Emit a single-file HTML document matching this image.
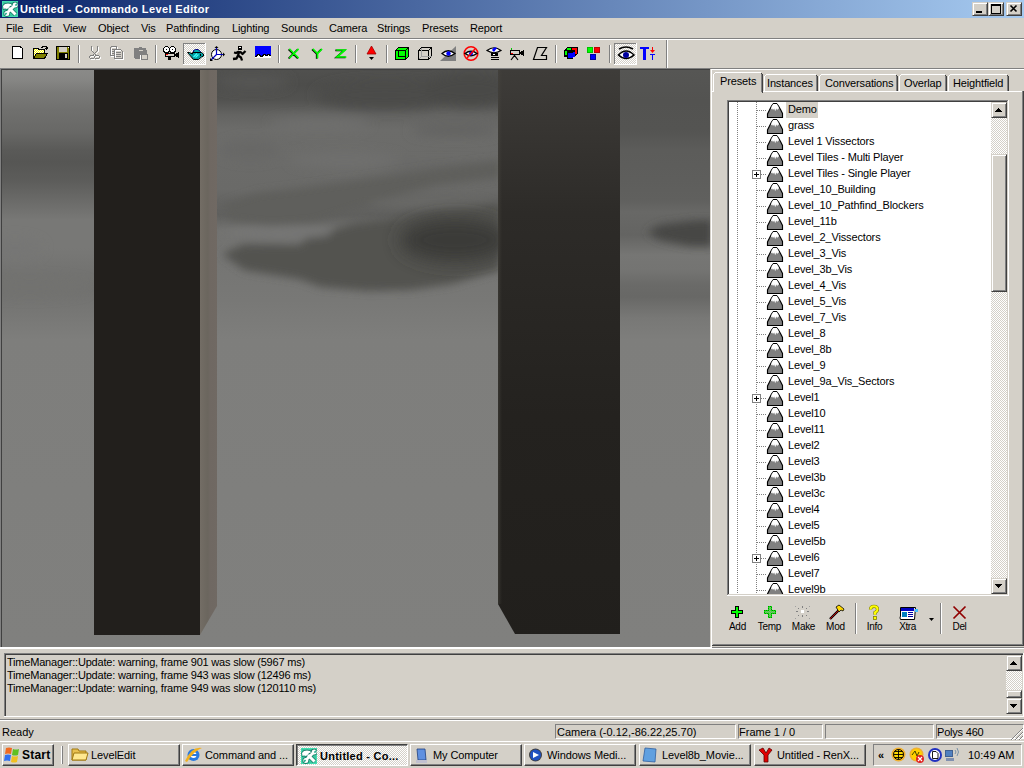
<!DOCTYPE html><html><head><meta charset="utf-8"><style>
*{margin:0;padding:0;box-sizing:border-box}
html,body{width:1024px;height:768px;overflow:hidden;background:#D4D0C8;font-family:"Liberation Sans",sans-serif;font-size:11px;color:#000}
.a{position:absolute}
.t{position:absolute;white-space:nowrap;line-height:13px}
.sunk{position:absolute;border-style:solid;border-width:1px;border-color:#808080 #fff #fff #808080}
.sbtn{position:absolute;background:#D4D0C8;border:1px solid;border-color:#D4D0C8 #404040 #404040 #D4D0C8;box-shadow:inset 1px 1px 0 #fff,inset -1px -1px 0 #808080}
.chk{background-color:#fff;background-image:linear-gradient(45deg,#D4D0C8 25%,transparent 25%,transparent 75%,#D4D0C8 75%),linear-gradient(45deg,#D4D0C8 25%,transparent 25%,transparent 75%,#D4D0C8 75%);background-size:2px 2px;background-position:0 0,1px 1px}
.hl{position:absolute;height:1px}
.vl{position:absolute;width:1px}
</style></head><body>
<div class="a" style="left:0;top:0;width:1024px;height:18px;background:linear-gradient(to right,#0A246A,#A6CAF0)"></div>
<svg class="a" style="left:2px;top:1px" width="16" height="16" viewBox="0 0 16 16"><rect width="16" height="16" fill="#44dcb0"/>
<rect x="1" y="1" width="14" height="14" fill="#34b896" opacity="0.6"/>
<g fill="#0e6a58" stroke="#0e6a58" stroke-width="1.6" opacity="0.85">
<path d="M1 5L3 3L6 2.5L9 3L10 4.5L8 5L7 6.5L5 8L3 7.5L1.5 8Z"/>
<path d="M7 7L13.5 13.5" stroke-width="4.4"/>
<path d="M12.5 4.5L5 12" stroke-width="4.2"/>
<circle cx="13.2" cy="4" r="2.5"/>
<circle cx="4.8" cy="12.6" r="2.5"/>
</g><g fill="#fff" stroke="#fff" stroke-width="0">
<path d="M1 5L3 3L6 2.5L9 3L10 4.5L8 5L7 6.5L5 8L3 7.5L1.5 8Z"/>
<path d="M7 7L13.5 13.5" stroke-width="3"/>
<path d="M12.5 4.5L5 12" stroke-width="2.8"/>
<circle cx="13.2" cy="4" r="2.5"/>
<circle cx="4.8" cy="12.6" r="2.5"/>
</g><path d="M14.6 2.2L12.8 4L14 5.2L15.6 3.5Z M3.4 14.4L5.2 12.6L4 11.4L2.4 13Z" fill="#30b090"/></svg>
<div class="t" style="left:20px;top:3px;color:#fff;font-weight:bold;letter-spacing:0.38px">Untitled - Commando Level Editor</div>
<div class="sbtn" style="left:972px;top:2px;width:16px;height:14px"></div>
<div class="sbtn" style="left:988px;top:2px;width:16px;height:14px"></div>
<div class="sbtn" style="left:1006px;top:2px;width:16px;height:14px"></div>
<svg class="a" style="left:972px;top:2px" width="50" height="14" viewBox="0 0 50 14" shape-rendering="crispEdges">
<rect x="4" y="9" width="6" height="2" fill="#000"/>
<rect x="19" y="2" width="9" height="9" fill="none" stroke="#000" stroke-width="1" transform="translate(0.5,0.5)"/>
<rect x="19" y="2" width="10" height="2" fill="#000"/>
<path d="M38.5 3.5L44.5 9.5M44.5 3.5L38.5 9.5" stroke="#000" stroke-width="1.6" shape-rendering="auto"/>
</svg>
<div class="t" style="left:6px;top:22px;letter-spacing:-0.15px">File</div>
<div class="t" style="left:33px;top:22px;letter-spacing:-0.15px">Edit</div>
<div class="t" style="left:63px;top:22px;letter-spacing:-0.15px">View</div>
<div class="t" style="left:98px;top:22px;letter-spacing:-0.15px">Object</div>
<div class="t" style="left:141px;top:22px;letter-spacing:-0.15px">Vis</div>
<div class="t" style="left:166px;top:22px;letter-spacing:-0.15px">Pathfinding</div>
<div class="t" style="left:232px;top:22px;letter-spacing:-0.15px">Lighting</div>
<div class="t" style="left:281px;top:22px;letter-spacing:-0.15px">Sounds</div>
<div class="t" style="left:329px;top:22px;letter-spacing:-0.15px">Camera</div>
<div class="t" style="left:377px;top:22px;letter-spacing:-0.15px">Strings</div>
<div class="t" style="left:422px;top:22px;letter-spacing:-0.15px">Presets</div>
<div class="t" style="left:470px;top:22px;letter-spacing:-0.15px">Report</div>
<div class="hl" style="left:0px;top:38px;width:1024px;background:#808080"></div>
<div class="hl" style="left:0px;top:39px;width:1024px;background:#fff"></div>
<div class="hl" style="left:0px;top:68px;width:1024px;background:#808080"></div>
<div class="vl" style="left:78px;top:45px;height:18px;background:#808080"></div><div class="vl" style="left:79px;top:45px;height:18px;background:#fff"></div>
<div class="vl" style="left:155px;top:45px;height:18px;background:#808080"></div><div class="vl" style="left:156px;top:45px;height:18px;background:#fff"></div>
<div class="vl" style="left:278px;top:45px;height:18px;background:#808080"></div><div class="vl" style="left:279px;top:45px;height:18px;background:#fff"></div>
<div class="vl" style="left:355px;top:45px;height:18px;background:#808080"></div><div class="vl" style="left:356px;top:45px;height:18px;background:#fff"></div>
<div class="vl" style="left:386px;top:45px;height:18px;background:#808080"></div><div class="vl" style="left:387px;top:45px;height:18px;background:#fff"></div>
<div class="vl" style="left:555px;top:45px;height:18px;background:#808080"></div><div class="vl" style="left:556px;top:45px;height:18px;background:#fff"></div>
<div class="vl" style="left:609px;top:45px;height:18px;background:#808080"></div><div class="vl" style="left:610px;top:45px;height:18px;background:#fff"></div>
<div class="vl" style="left:666px;top:40px;height:28px;background:#808080"></div><div class="vl" style="left:667px;top:40px;height:28px;background:#fff"></div>
<svg class="a" style="left:0;top:40px" width="1024" height="28" viewBox="0 40 1024 28">
<defs>
<pattern id="ydith" width="2" height="2" patternUnits="userSpaceOnUse"><rect width="2" height="2" fill="#ffff00"/><rect width="1" height="1" fill="#fff"/><rect x="1" y="1" width="1" height="1" fill="#fff"/></pattern>
</defs>
<g shape-rendering="crispEdges">
<!-- new doc -->
<path d="M12.5 46.5H20.5L22.5 48.5V58.5H12.5Z" fill="#fff" stroke="#000"/>
<rect x="20" y="47" width="1" height="1" fill="#000"/>
<!-- open -->
<path d="M33.5 58.5V48.5H38.5V49.5H44.5V53.5" fill="url(#ydith)" stroke="#000"/>
<path d="M33.5 58.5L36.5 53.5H47.5L44.5 58.5Z" fill="#808000" stroke="#000"/>
<path d="M41 48V47H42V46H46V47H47V49" fill="none" stroke="#000"/>
<rect x="45" y="48" width="3" height="1" fill="#000"/><rect x="46" y="49" width="1" height="1" fill="#000"/>
<!-- save -->
<rect x="56" y="46" width="14" height="14" fill="#000"/>
<rect x="57" y="47" width="12" height="12" fill="#808000"/>
<rect x="59" y="47" width="8" height="5" fill="#D4D0C8"/>
<rect x="59" y="53" width="9" height="6" fill="#000"/>
<rect x="65" y="54" width="2" height="4" fill="#D4D0C8"/>
<rect x="68" y="47" width="1" height="1" fill="#fff"/>
</g>
<!-- disabled cut/copy/paste -->
<g fill="none" shape-rendering="crispEdges">
<g stroke="#fff" transform="translate(1,1)">
<path d="M91.5 46V50.5L96.5 55.5M97.5 46V50.5L92.5 55.5M92 55.5A1.6 1.6 0 1 0 92 58.5A1.6 1.6 0 1 0 92 55.5M97 55.5A1.6 1.6 0 1 0 97 58.5A1.6 1.6 0 1 0 97 55.5"/>
<path d="M110.5 46.5H116.5V48.5M110.5 46.5V55.5H113.5M114.5 49.5H120.5L122.5 51.5V58.5H114.5Z"/>
</g>
<g stroke="#808080">
<path d="M91.5 46V50.5L96.5 55.5M97.5 46V50.5L92.5 55.5M92 55.5A1.6 1.6 0 1 0 92 58.5A1.6 1.6 0 1 0 92 55.5M97 55.5A1.6 1.6 0 1 0 97 58.5A1.6 1.6 0 1 0 97 55.5"/>
<path d="M110.5 46.5H116.5V48.5M110.5 46.5V55.5H113.5M114.5 49.5H120.5L122.5 51.5V58.5H114.5Z"/>
<path d="M112 49.5H115M112 51.5H115M112 53.5H114M116 52.5H121M116 54.5H121M116 56.5H121"/>
</g>
</g>
<g shape-rendering="crispEdges">
<rect x="134" y="48" width="2" height="11" fill="#fff" opacity="0"/>
<path d="M134 48H139V47H142V48H146V50H147V55H140V59H135V58H134Z" fill="#808080"/>
<rect x="140" y="55" width="8" height="5" fill="#fff"/>
<rect x="141" y="54" width="6" height="5" fill="#D4D0C8" stroke="#808080" stroke-width="1"/>
<rect x="139" y="50" width="4" height="1" fill="#D4D0C8"/>
</g>
<!-- camera -->
<g shape-rendering="crispEdges">
<circle cx="166.5" cy="49.5" r="3" fill="#fff" stroke="#000"/>
<circle cx="172.5" cy="49.5" r="3" fill="#fff" stroke="#000"/>
<rect x="166" y="49" width="1" height="1" fill="#000"/><rect x="172" y="49" width="1" height="1" fill="#000"/>
<rect x="165" y="53" width="10" height="4" fill="#000"/>
<rect x="166" y="54" width="8" height="2" fill="#D4D0C8"/>
<rect x="166" y="54" width="2" height="1" fill="#ff0000"/>
<path d="M175 54L179 52V58L175 56Z" fill="#000"/>
<rect x="168" y="57" width="3" height="3" fill="#000"/>
</g>
<!-- teapot pressed button -->
<rect x="183" y="43" width="23" height="22" fill="url(#chk2)"/>
<defs><pattern id="chk2" width="2" height="2" patternUnits="userSpaceOnUse"><rect width="2" height="2" fill="#D4D0C8"/><rect width="1" height="1" fill="#fff"/><rect x="1" y="1" width="1" height="1" fill="#fff"/></pattern></defs>
<g shape-rendering="crispEdges">
<rect x="183" y="43" width="23" height="1" fill="#808080"/><rect x="183" y="43" width="1" height="22" fill="#808080"/>
<rect x="183" y="64" width="23" height="1" fill="#fff"/><rect x="205" y="43" width="1" height="22" fill="#fff"/>
</g>
<path d="M187.5 52.5H189.5L192.5 54V52.5H201.5L203.5 54V56L201.5 57L198.5 59.5H193.5Z" fill="#00a0a0" stroke="#000" stroke-width="1"/>
<path d="M193.5 52V50.5L195.5 49.5H198L200.5 51.5V52" fill="#00a8a8" stroke="#000080" stroke-width="1"/>
<path d="M193.5 57L197 53.5M195.5 57.5L198.5 54.5" stroke="#40ffff" stroke-width="1.1"/>
<rect x="200" y="54" width="1" height="2" fill="#000"/>
<!-- axis -->
<circle cx="216.5" cy="54.5" r="5" fill="#fff" stroke="#000"/>
<path d="M216.5 47V54.5H223M216.5 54.5L211 60" stroke="#0000c0" stroke-width="1.2" fill="none"/>
<path d="M214.5 48L216.5 46L218.5 48ZM223 52.5L225 54.5L223 56.5ZM210 58V61H213Z" fill="#000"/>
<!-- runner -->
<rect x="238" y="46" width="4" height="4" fill="#000"/><rect x="239" y="47" width="2" height="1" fill="#fff"/>
<path d="M239.5 51L238 55.5L241 57.5L242 60.5M238 55.5L236.5 58.5L233 59M239 51.5L236 53L234 52.5M240 51.5L242.5 54L245.5 51" stroke="#000" stroke-width="2.3" fill="none" stroke-linejoin="round"/>
<!-- blue flag -->
<g shape-rendering="crispEdges">
<rect x="255" y="46" width="16" height="11" fill="#0000ff"/>
<path d="M255 58V56H256V55H257V54H259V55H260V56H262V55H263V54H265V55H267V54H269V55H271V58Z" fill="#fff"/>
<path d="M255 56.5H256.5V55.5H257.5V54.5H259.5V55.5H260.5V56.5H262.5V55.5H263.5V54.5H265.5V55.5H267.5V54.5H269.5V55.5H271" stroke="#000" fill="none"/>
</g>
<!-- XYZ -->
<g fill="none" stroke-width="1.7" stroke-linecap="square">
<path d="M290 49.5L298 57.5M298 49.5L290 57.5M313.5 49.5L317.5 53.5L321.5 49.5M317.5 53.5V57.5M337 50H345L337 57H345.5" stroke="#000" transform="translate(-0.8,0.4)"/>
<path d="M290 49.5L298 57.5M298 49.5L290 57.5M313.5 49.5L317.5 53.5L321.5 49.5M317.5 53.5V57.5M337 50H345L337 57H345.5" stroke="#00ff00"/>
</g>
<!-- red cone -->
<path d="M371.5 46L376 54H367Z" fill="#ff0000" stroke="#a00000" stroke-width="0.8"/>
<path d="M369 57H374L371.5 60Z" fill="#000"/>
<!-- green cube -->
<g shape-rendering="crispEdges">
<path d="M395.5 59.5V50.5L398.5 47.5H408.5V56.5L405.5 59.5Z" fill="#00ff00" stroke="#000"/>
<path d="M398.5 50.5H405.5V56.5H398.5ZM395.5 50.5H405.5V59.5M405.5 50.5L408.5 47.5" fill="none" stroke="#000"/>
<!-- wire cube -->
<path d="M418.5 59.5V50.5L421.5 47.5H431.5V56.5L428.5 59.5Z" fill="none" stroke="#000"/>
<path d="M418.5 50.5H428.5V59.5M428.5 50.5L431.5 47.5" fill="none" stroke="#000"/>
<path d="M421.5 47.5V56.5H431.5M421.5 56.5L418.5 59.5" fill="none" stroke="#a0a0a0"/>
</g>
<!-- eye w/ triangle -->
<path d="M440 61L456 46V61Z" fill="#808080"/>
<path d="M442 53.5Q448 48 455 53.5Q448 59 442 53.5Z" fill="#fff" stroke="#000" stroke-width="1.3"/>
<circle cx="448.5" cy="53.5" r="2.2" fill="#0000ff"/>
<!-- no eye -->
<circle cx="471" cy="53.5" r="6.8" fill="none" stroke="#ff0000" stroke-width="1.6"/>
<path d="M465 53.5Q471 49 477 53.5Q471 58 465 53.5Z" fill="#fff" stroke="#000" stroke-width="1.3"/>
<circle cx="471" cy="53.5" r="2" fill="#0000ff"/>
<path d="M467 58L475 49" stroke="#ff0000" stroke-width="1.5"/>
<!-- eye stack -->
<path d="M487 50.5Q494 45 501 50.5Q494 55 487 50.5Z" fill="#fff" stroke="#000" stroke-width="1.2"/>
<path d="M492 50Q494 46 497 48L494 52Z" fill="#0000ff"/>
<g shape-rendering="crispEdges">
<rect x="491" y="53" width="7" height="3" fill="#000"/><rect x="493" y="54" width="2" height="1" fill="#fff"/>
<rect x="491" y="57" width="8" height="1" fill="#000"/><rect x="491" y="59" width="8" height="1" fill="#000"/>
<!-- camera tripod -->
<rect x="511" y="48" width="1" height="3" fill="#00c000"/>
<rect x="510" y="50" width="10" height="5" fill="#000"/>
<rect x="511" y="51" width="8" height="3" fill="#D4D0C8"/>
<rect x="511" y="53" width="2" height="1" fill="#ff0000"/>
<path d="M520 52L524 50V56L520 54Z" fill="#000"/>
</g>
<path d="M511 60L514.5 55.5L518 60M514.5 55.5V57" stroke="#000" stroke-width="1.2" fill="none"/>
<!-- Z shape -->
<path d="M537.5 47.5H546.5L541.5 55.5H546.5V59.5H533.5Z" fill="none" stroke="#000" stroke-width="1.2"/>
<!-- rgb cube -->
<g shape-rendering="crispEdges">
<path d="M564.5 56.5V50.5L567.5 47.5H577.5V53.5L573.5 57.5" fill="#000" stroke="#000"/>
<rect x="567" y="48" width="4" height="2" fill="#00ff00"/><rect x="572" y="48" width="5" height="2" fill="#ff0000"/>
<rect x="565" y="51" width="2" height="4" fill="#00ff00"/><rect x="575" y="50" width="2" height="4" fill="#ff0000"/>
<rect x="567" y="52" width="6" height="7" fill="#000"/><rect x="568" y="53" width="5" height="5" fill="#0000ff"/>
<rect x="573" y="52" width="2" height="5" fill="#0000ff"/>
<!-- three cubes -->
<rect x="587" y="47" width="6" height="6" fill="#00c000"/><rect x="588" y="48" width="4" height="4" fill="#00ff00"/>
<rect x="594" y="47" width="6" height="6" fill="#c00000"/><rect x="595" y="48" width="4" height="4" fill="#ff0000"/>
<rect x="590" y="54" width="6" height="6" fill="#0000a0"/><rect x="591" y="55" width="4" height="4" fill="#0000ff"/>
</g>
<!-- eye pressed -->
<rect x="614" y="43" width="23" height="22" fill="url(#chk2)"/>
<g shape-rendering="crispEdges">
<rect x="614" y="43" width="23" height="1" fill="#808080"/><rect x="614" y="43" width="1" height="22" fill="#808080"/>
<rect x="614" y="64" width="23" height="1" fill="#fff"/><rect x="636" y="43" width="1" height="22" fill="#fff"/>
</g>
<path d="M619 49Q626 45 633 49" stroke="#000" stroke-width="1.5" fill="none"/>
<path d="M618.5 55Q626 47 634 55Q626 62 618.5 55Z" fill="#fff" stroke="#000" stroke-width="1.6"/>
<circle cx="626" cy="55" r="3" fill="#0000a0"/>
<!-- T icons -->
<g shape-rendering="crispEdges">
<rect x="640" y="47" width="9" height="2" fill="#0000ff"/><rect x="643" y="47" width="3" height="13" fill="#0000ff"/>
<rect x="650" y="54" width="5" height="1" fill="#0000ff"/><rect x="652" y="54" width="1" height="6" fill="#0000ff"/>
<rect x="652" y="47" width="1" height="5" fill="#ff0000"/>
</g>
<path d="M650 50H655L652.5 53Z" fill="#ff0000"/>
</svg>

<div class="vl" style="left:0px;top:68px;height:580px;background:#808080"></div>
<div class="hl" style="left:0px;top:68px;width:711px;background:#808080"></div>
<div class="vl" style="left:1px;top:69px;height:578px;background:#404040"></div>
<div class="hl" style="left:1px;top:69px;width:709px;background:#404040"></div>
<div class="a" style="left:2px;top:70px;width:708px;height:577px;overflow:hidden"><svg width="708" height="577" viewBox="2 70 708 577" style="position:absolute;left:0;top:0;display:block">
<defs><linearGradient id="gl" x1="0" y1="70" x2="0" y2="646" gradientUnits="userSpaceOnUse"><stop offset="0.0000" stop-color="rgb(138,138,136)"/><stop offset="0.0174" stop-color="rgb(134,134,132)"/><stop offset="0.0382" stop-color="rgb(122,122,120)"/><stop offset="0.0694" stop-color="rgb(112,112,110)"/><stop offset="0.1076" stop-color="rgb(104,104,102)"/><stop offset="0.1389" stop-color="rgb(90,90,88)"/><stop offset="0.1597" stop-color="rgb(86,86,84)"/><stop offset="0.1910" stop-color="rgb(92,92,90)"/><stop offset="0.2257" stop-color="rgb(106,106,104)"/><stop offset="0.2604" stop-color="rgb(120,120,118)"/><stop offset="0.3090" stop-color="rgb(120,120,118)"/><stop offset="0.3559" stop-color="rgb(114,114,112)"/><stop offset="0.3819" stop-color="rgb(113,113,111)"/><stop offset="0.4167" stop-color="rgb(118,118,116)"/><stop offset="0.4688" stop-color="rgb(126,126,124)"/><stop offset="1.0000" stop-color="rgb(128,128,126)"/></linearGradient><linearGradient id="gm" x1="0" y1="70" x2="0" y2="646" gradientUnits="userSpaceOnUse"><stop offset="0.0000" stop-color="rgb(80,80,78)"/><stop offset="0.0260" stop-color="rgb(77,77,75)"/><stop offset="0.0521" stop-color="rgb(82,82,80)"/><stop offset="0.0781" stop-color="rgb(100,100,98)"/><stop offset="0.1042" stop-color="rgb(108,108,106)"/><stop offset="0.2083" stop-color="rgb(106,106,104)"/><stop offset="0.2344" stop-color="rgb(98,98,96)"/><stop offset="0.2517" stop-color="rgb(96,96,94)"/><stop offset="0.2778" stop-color="rgb(114,114,112)"/><stop offset="0.3993" stop-color="rgb(120,120,118)"/><stop offset="0.4688" stop-color="rgb(126,126,124)"/><stop offset="1.0000" stop-color="rgb(128,128,126)"/></linearGradient><linearGradient id="gr" x1="0" y1="70" x2="0" y2="646" gradientUnits="userSpaceOnUse"><stop offset="0.0000" stop-color="rgb(86,86,84)"/><stop offset="0.0521" stop-color="rgb(83,83,81)"/><stop offset="0.1042" stop-color="rgb(84,84,82)"/><stop offset="0.1389" stop-color="rgb(92,92,90)"/><stop offset="0.1910" stop-color="rgb(94,94,92)"/><stop offset="0.2257" stop-color="rgb(96,96,94)"/><stop offset="0.2465" stop-color="rgb(104,104,102)"/><stop offset="0.2865" stop-color="rgb(100,100,98)"/><stop offset="0.3212" stop-color="rgb(118,118,116)"/><stop offset="0.3472" stop-color="rgb(116,116,114)"/><stop offset="0.3733" stop-color="rgb(106,106,104)"/><stop offset="0.3941" stop-color="rgb(104,104,102)"/><stop offset="0.4306" stop-color="rgb(120,120,118)"/><stop offset="0.4688" stop-color="rgb(126,126,124)"/><stop offset="1.0000" stop-color="rgb(128,128,126)"/></linearGradient>
<filter id="b6" x="-50%" y="-50%" width="200%" height="200%"><feGaussianBlur stdDeviation="6"/></filter>
<filter id="b8" x="-50%" y="-50%" width="200%" height="200%"><feGaussianBlur stdDeviation="9"/></filter>
<filter id="b4" x="-50%" y="-50%" width="200%" height="200%"><feGaussianBlur stdDeviation="4"/></filter>
<linearGradient id="p2" x1="0" y1="70" x2="0" y2="646" gradientUnits="userSpaceOnUse">
<stop offset="0" stop-color="#3e3c39"/><stop offset="0.25" stop-color="#2d2b28"/><stop offset="0.6" stop-color="#24221f"/><stop offset="1" stop-color="#211f1c"/>
</linearGradient>
<linearGradient id="side1" x1="200" y1="0" x2="217" y2="0" gradientUnits="userSpaceOnUse">
<stop offset="0" stop-color="#736d65"/><stop offset="0.45" stop-color="#6b665e"/><stop offset="0.6" stop-color="#6f6862"/><stop offset="1" stop-color="#706963"/>
</linearGradient>
<linearGradient id="p2s" x1="498" y1="0" x2="502" y2="0" gradientUnits="userSpaceOnUse">
<stop offset="0" stop-color="#48463f" stop-opacity="0.5"/><stop offset="1" stop-color="#48463f" stop-opacity="0"/>
</linearGradient>
</defs>
<rect x="2" y="70" width="708" height="577" fill="url(#gm)"/><rect x="2" y="70" width="92" height="577" fill="url(#gl)"/><rect x="620" y="70" width="90" height="577" fill="url(#gr)"/><g filter="url(#b6)"><ellipse cx="252" cy="82" rx="38" ry="7" fill="rgb(86,86,84)"/><ellipse cx="385" cy="95" rx="70" ry="14" fill="rgb(76,76,74)"/><ellipse cx="470" cy="90" rx="45" ry="16" fill="rgb(72,72,70)"/><ellipse cx="345" cy="160" rx="55" ry="7" fill="rgb(112,112,110)"/><ellipse cx="440" cy="170" rx="60" ry="7" fill="rgb(104,104,102)"/><ellipse cx="320" cy="124" rx="50" ry="6" fill="rgb(112,112,110)"/><ellipse cx="455" cy="130" rx="45" ry="6" fill="rgb(98,98,96)"/><ellipse cx="250" cy="150" rx="30" ry="10" fill="rgb(104,104,102)"/><ellipse cx="15" cy="248" rx="28" ry="10" fill="rgb(118,118,116)"/><ellipse cx="30" cy="287" rx="60" ry="9" fill="rgb(114,114,112)"/></g><g filter="url(#b4)"><polygon points="224,204 258,193 299,188 341,182 371,178 438,168 500,160 500,178 438,185 382,200 341,213 313,222 271,225 230,220" fill="rgb(94,94,92)"/><ellipse cx="280" cy="233" rx="55" ry="6" fill="rgb(118,118,116)"/><ellipse cx="430" cy="203" rx="60" ry="4" fill="rgb(106,106,104)"/><polygon points="222,254 244,244 299,245 307,238 327,236 335,229 355,223 396,218 438,209 500,204 500,270 479,276 452,284 410,290 368,291 321,287 299,279 244,270" fill="rgb(82,82,80)"/><polygon points="647,232 660,225 690,221 712,220 712,246 690,246 660,240" fill="rgb(70,70,68)"/></g><ellipse cx="455" cy="240" rx="55" ry="22" fill="rgb(58,58,56)" filter="url(#b8)"/>
<rect x="94" y="70" width="106" height="565" fill="#221f1c"/>
<polygon points="200,70 217,70 217,606 200,635" fill="url(#side1)"/>
<polygon points="498,70 620,70 620,634 515,634 498,604" fill="url(#p2)"/>
<rect x="498" y="70" width="4" height="534" fill="url(#p2s)"/>
</svg></div>
<div class="vl" style="left:710px;top:69px;height:578px;background:#D4D0C8"></div>
<div class="vl" style="left:711px;top:69px;height:580px;background:#fff"></div>
<div class="hl" style="left:0px;top:647px;width:712px;background:#fff"></div>
<div class="hl" style="left:0px;top:648px;width:1024px;background:#fff"></div>
<div class="hl" style="left:712px;top:69px;width:312px;background:#fff"></div>
<div class="vl" style="left:1023px;top:91px;height:555px;background:#404040"></div>
<div class="vl" style="left:1022px;top:91px;height:554px;background:#808080"></div>
<div class="hl" style="left:712px;top:645px;width:312px;background:#404040"></div>
<div class="hl" style="left:713px;top:644px;width:310px;background:#808080"></div>
<div class="hl" style="left:712px;top:647px;width:312px;background:#808080"></div>
<div class="hl" style="left:712px;top:91px;width:310px;background:#fff"></div>
<div class="a" style="left:764px;top:74px;width:54px;height:17px;background:#D4D0C8"></div><div class="vl" style="left:764px;top:76px;height:15px;background:#fff"></div><div class="hl" style="left:766px;top:74px;width:50px;background:#fff"></div><div class="a" style="left:765px;top:75px;width:1px;height:1px;background:#fff"></div><div class="vl" style="left:817px;top:76px;height:15px;background:#404040"></div><div class="vl" style="left:816px;top:75px;height:16px;background:#808080"></div><div class="a" style="left:816px;top:75px;width:1px;height:1px;background:#404040"></div><div class="t" style="left:767px;top:77px;letter-spacing:-0.15px">Instances</div>
<div class="a" style="left:819px;top:74px;width:79px;height:17px;background:#D4D0C8"></div><div class="vl" style="left:819px;top:76px;height:15px;background:#fff"></div><div class="hl" style="left:821px;top:74px;width:75px;background:#fff"></div><div class="a" style="left:820px;top:75px;width:1px;height:1px;background:#fff"></div><div class="vl" style="left:897px;top:76px;height:15px;background:#404040"></div><div class="vl" style="left:896px;top:75px;height:16px;background:#808080"></div><div class="a" style="left:896px;top:75px;width:1px;height:1px;background:#404040"></div><div class="t" style="left:825px;top:77px;letter-spacing:-0.15px">Conversations</div>
<div class="a" style="left:899px;top:74px;width:48px;height:17px;background:#D4D0C8"></div><div class="vl" style="left:899px;top:76px;height:15px;background:#fff"></div><div class="hl" style="left:901px;top:74px;width:44px;background:#fff"></div><div class="a" style="left:900px;top:75px;width:1px;height:1px;background:#fff"></div><div class="vl" style="left:946px;top:76px;height:15px;background:#404040"></div><div class="vl" style="left:945px;top:75px;height:16px;background:#808080"></div><div class="a" style="left:945px;top:75px;width:1px;height:1px;background:#404040"></div><div class="t" style="left:904px;top:77px;letter-spacing:-0.15px">Overlap</div>
<div class="a" style="left:948px;top:74px;width:61px;height:17px;background:#D4D0C8"></div><div class="vl" style="left:948px;top:76px;height:15px;background:#fff"></div><div class="hl" style="left:950px;top:74px;width:57px;background:#fff"></div><div class="a" style="left:949px;top:75px;width:1px;height:1px;background:#fff"></div><div class="vl" style="left:1008px;top:76px;height:15px;background:#404040"></div><div class="vl" style="left:1007px;top:75px;height:16px;background:#808080"></div><div class="a" style="left:1007px;top:75px;width:1px;height:1px;background:#404040"></div><div class="t" style="left:953px;top:77px;letter-spacing:-0.15px">Heightfield</div>
<div class="a" style="left:713px;top:72px;width:50px;height:20px;background:#D4D0C8"></div><div class="vl" style="left:713px;top:74px;height:18px;background:#fff"></div><div class="hl" style="left:715px;top:72px;width:46px;background:#fff"></div><div class="a" style="left:714px;top:73px;width:1px;height:1px;background:#fff"></div><div class="vl" style="left:762px;top:74px;height:19px;background:#404040"></div><div class="vl" style="left:761px;top:73px;height:19px;background:#808080"></div><div class="a" style="left:761px;top:73px;width:1px;height:1px;background:#404040"></div><div class="t" style="left:720px;top:75px;letter-spacing:-0.15px">Presets</div>
<div class="a" style="left:714px;top:91px;width:47px;height:2px;background:#D4D0C8"></div>
<div class="hl" style="left:727px;top:100px;width:281px;background:#808080"></div>
<div class="vl" style="left:727px;top:100px;height:495px;background:#808080"></div>
<div class="hl" style="left:728px;top:101px;width:279px;background:#404040"></div>
<div class="vl" style="left:728px;top:101px;height:493px;background:#404040"></div>
<div class="hl" style="left:727px;top:595px;width:282px;background:#fff"></div>
<div class="vl" style="left:1008px;top:100px;height:496px;background:#fff"></div>
<div class="hl" style="left:728px;top:594px;width:280px;background:#D4D0C8"></div>
<div class="vl" style="left:1007px;top:101px;height:494px;background:#D4D0C8"></div>
<div class="a" style="left:729px;top:102px;width:262px;height:492px;background:#fff;overflow:hidden"><svg class="a" style="left:0;top:0" width="262" height="492" shape-rendering="crispEdges"><defs><g id="mt"><path d="M0.5 14.5V11L2.5 7L4.5 3L6.5 0.5H9.5L11.5 3L13.5 6.5L15.5 10.5V14.5Z" fill="#808080" stroke="#000" stroke-width="1.15" shape-rendering="auto"/><path d="M6.2 1H9.8L11.6 4L12.2 6L11 5.6L10.2 7.2L9.2 5.6L8.2 8.2L7.2 5.6L6 7L5.2 5.6L3.8 6.4L4.6 3.5Z" fill="#fff" shape-rendering="auto"/></g><pattern id="dv" width="1" height="2" patternUnits="userSpaceOnUse"><rect width="1" height="1" fill="#808080"/></pattern><pattern id="dh" width="2" height="1" patternUnits="userSpaceOnUse"><rect width="1" height="1" fill="#808080"/></pattern></defs><rect x="8" y="0" width="1" height="492" fill="url(#dv)"/><rect x="27" y="0" width="1" height="492" fill="url(#dv)"/><rect x="28" y="8" width="10" height="1" fill="url(#dh)"/><use href="#mt" x="38" y="1"/><rect x="28" y="24" width="10" height="1" fill="url(#dh)"/><use href="#mt" x="38" y="17"/><rect x="28" y="40" width="10" height="1" fill="url(#dh)"/><use href="#mt" x="38" y="33"/><rect x="28" y="56" width="10" height="1" fill="url(#dh)"/><use href="#mt" x="38" y="49"/><rect x="28" y="72" width="10" height="1" fill="url(#dh)"/><use href="#mt" x="38" y="65"/><rect x="23.5" y="68.5" width="8" height="8" fill="#fff" stroke="#808080"/><rect x="25" y="72" width="5" height="1" fill="#000"/><rect x="27" y="70" width="1" height="5" fill="#000"/><rect x="28" y="88" width="10" height="1" fill="url(#dh)"/><use href="#mt" x="38" y="81"/><rect x="28" y="104" width="10" height="1" fill="url(#dh)"/><use href="#mt" x="38" y="97"/><rect x="28" y="120" width="10" height="1" fill="url(#dh)"/><use href="#mt" x="38" y="113"/><rect x="28" y="136" width="10" height="1" fill="url(#dh)"/><use href="#mt" x="38" y="129"/><rect x="28" y="152" width="10" height="1" fill="url(#dh)"/><use href="#mt" x="38" y="145"/><rect x="28" y="168" width="10" height="1" fill="url(#dh)"/><use href="#mt" x="38" y="161"/><rect x="28" y="184" width="10" height="1" fill="url(#dh)"/><use href="#mt" x="38" y="177"/><rect x="28" y="200" width="10" height="1" fill="url(#dh)"/><use href="#mt" x="38" y="193"/><rect x="28" y="216" width="10" height="1" fill="url(#dh)"/><use href="#mt" x="38" y="209"/><rect x="28" y="232" width="10" height="1" fill="url(#dh)"/><use href="#mt" x="38" y="225"/><rect x="28" y="248" width="10" height="1" fill="url(#dh)"/><use href="#mt" x="38" y="241"/><rect x="28" y="264" width="10" height="1" fill="url(#dh)"/><use href="#mt" x="38" y="257"/><rect x="28" y="280" width="10" height="1" fill="url(#dh)"/><use href="#mt" x="38" y="273"/><rect x="28" y="296" width="10" height="1" fill="url(#dh)"/><use href="#mt" x="38" y="289"/><rect x="23.5" y="292.5" width="8" height="8" fill="#fff" stroke="#808080"/><rect x="25" y="296" width="5" height="1" fill="#000"/><rect x="27" y="294" width="1" height="5" fill="#000"/><rect x="28" y="312" width="10" height="1" fill="url(#dh)"/><use href="#mt" x="38" y="305"/><rect x="28" y="328" width="10" height="1" fill="url(#dh)"/><use href="#mt" x="38" y="321"/><rect x="28" y="344" width="10" height="1" fill="url(#dh)"/><use href="#mt" x="38" y="337"/><rect x="28" y="360" width="10" height="1" fill="url(#dh)"/><use href="#mt" x="38" y="353"/><rect x="28" y="376" width="10" height="1" fill="url(#dh)"/><use href="#mt" x="38" y="369"/><rect x="28" y="392" width="10" height="1" fill="url(#dh)"/><use href="#mt" x="38" y="385"/><rect x="28" y="408" width="10" height="1" fill="url(#dh)"/><use href="#mt" x="38" y="401"/><rect x="28" y="424" width="10" height="1" fill="url(#dh)"/><use href="#mt" x="38" y="417"/><rect x="28" y="440" width="10" height="1" fill="url(#dh)"/><use href="#mt" x="38" y="433"/><rect x="28" y="456" width="10" height="1" fill="url(#dh)"/><use href="#mt" x="38" y="449"/><rect x="23.5" y="452.5" width="8" height="8" fill="#fff" stroke="#808080"/><rect x="25" y="456" width="5" height="1" fill="#000"/><rect x="27" y="454" width="1" height="5" fill="#000"/><rect x="28" y="472" width="10" height="1" fill="url(#dh)"/><use href="#mt" x="38" y="465"/><rect x="28" y="488" width="10" height="1" fill="url(#dh)"/><use href="#mt" x="38" y="481"/></svg>
<div class="a" style="left:57px;top:0;width:32px;height:16px;background:#D4D0C8"></div>
<div class="t" style="left:59px;top:1px;letter-spacing:-0.15px">Demo</div>
<div class="t" style="left:59px;top:17px;letter-spacing:-0.15px">grass</div>
<div class="t" style="left:59px;top:33px;letter-spacing:-0.15px">Level 1 Vissectors</div>
<div class="t" style="left:59px;top:49px;letter-spacing:-0.15px">Level Tiles - Multi Player</div>
<div class="t" style="left:59px;top:65px;letter-spacing:-0.15px">Level Tiles - Single Player</div>
<div class="t" style="left:59px;top:81px;letter-spacing:-0.15px">Level_10_Building</div>
<div class="t" style="left:59px;top:97px;letter-spacing:-0.15px">Level_10_Pathfind_Blockers</div>
<div class="t" style="left:59px;top:113px;letter-spacing:-0.15px">Level_11b</div>
<div class="t" style="left:59px;top:129px;letter-spacing:-0.15px">Level_2_Vissectors</div>
<div class="t" style="left:59px;top:145px;letter-spacing:-0.15px">Level_3_Vis</div>
<div class="t" style="left:59px;top:161px;letter-spacing:-0.15px">Level_3b_Vis</div>
<div class="t" style="left:59px;top:177px;letter-spacing:-0.15px">Level_4_Vis</div>
<div class="t" style="left:59px;top:193px;letter-spacing:-0.15px">Level_5_Vis</div>
<div class="t" style="left:59px;top:209px;letter-spacing:-0.15px">Level_7_Vis</div>
<div class="t" style="left:59px;top:225px;letter-spacing:-0.15px">Level_8</div>
<div class="t" style="left:59px;top:241px;letter-spacing:-0.15px">Level_8b</div>
<div class="t" style="left:59px;top:257px;letter-spacing:-0.15px">Level_9</div>
<div class="t" style="left:59px;top:273px;letter-spacing:-0.15px">Level_9a_Vis_Sectors</div>
<div class="t" style="left:59px;top:289px;letter-spacing:-0.15px">Level1</div>
<div class="t" style="left:59px;top:305px;letter-spacing:-0.15px">Level10</div>
<div class="t" style="left:59px;top:321px;letter-spacing:-0.15px">Level11</div>
<div class="t" style="left:59px;top:337px;letter-spacing:-0.15px">Level2</div>
<div class="t" style="left:59px;top:353px;letter-spacing:-0.15px">Level3</div>
<div class="t" style="left:59px;top:369px;letter-spacing:-0.15px">Level3b</div>
<div class="t" style="left:59px;top:385px;letter-spacing:-0.15px">Level3c</div>
<div class="t" style="left:59px;top:401px;letter-spacing:-0.15px">Level4</div>
<div class="t" style="left:59px;top:417px;letter-spacing:-0.15px">Level5</div>
<div class="t" style="left:59px;top:433px;letter-spacing:-0.15px">Level5b</div>
<div class="t" style="left:59px;top:449px;letter-spacing:-0.15px">Level6</div>
<div class="t" style="left:59px;top:465px;letter-spacing:-0.15px">Level7</div>
<div class="t" style="left:59px;top:481px;letter-spacing:-0.15px">Level9b</div></div>
<div class="a chk" style="left:991px;top:118px;width:16px;height:460px"></div>
<div class="sbtn" style="left:991px;top:102px;width:16px;height:16px"></div>
<div class="sbtn" style="left:991px;top:154px;width:16px;height:138px"></div>
<div class="sbtn" style="left:991px;top:578px;width:16px;height:16px"></div>
<svg class="a" style="left:991px;top:102px" width="16" height="492" shape-rendering="crispEdges"><path d="M7 6H8V7H9V8H10V9H11V10H4V9H5V8H6V7H7Z" fill="#000"/><path d="M4 482H11V483H10V484H9V485H8V486H7V485H6V484H5V483H4Z" fill="#000"/></svg>
<svg class="a" style="left:720px;top:600px" width="260" height="24" viewBox="720 600 260 24">
<g shape-rendering="crispEdges">
<!-- add: green plus with black outline 731..743 x 606..618 -->
<path d="M735 606H739V610H743V614H739V618H735V614H731V610H735Z" fill="#000"/>
<path d="M736 607H738V611H742V613H738V617H736V613H732V611H736Z" fill="#00ff00"/>
<!-- temp: dotted green plus 764..776 -->
<defs><pattern id="gdith" width="2" height="2" patternUnits="userSpaceOnUse"><rect width="2" height="2" fill="#00ff00"/><rect width="1" height="1" fill="#008000"/><rect x="1" y="1" width="1" height="1" fill="#008000"/></pattern></defs>
<path d="M768 606H772V610H776V614H772V618H768V614H764V610H768Z" fill="url(#gdith)"/>
<path d="M769 607H771V611H775V613H771V617H769V613H765V611H769Z" fill="#D4D0C8" opacity="0.45"/>
<!-- make: sparkle -->
<rect x="801" y="610" width="3" height="3" fill="#fff"/>
<rect x="802" y="606" width="1" height="2" fill="#808080"/><rect x="802" y="615" width="1" height="2" fill="#808080"/>
<rect x="796" y="611" width="2" height="1" fill="#808080"/><rect x="807" y="611" width="2" height="1" fill="#808080"/>
<rect x="798" y="608" width="1" height="1" fill="#808080"/><rect x="806" y="608" width="1" height="1" fill="#808080"/>
<rect x="798" y="615" width="1" height="1" fill="#808080"/><rect x="806" y="615" width="1" height="1" fill="#808080"/>
<rect x="795" y="606" width="1" height="1" fill="#a0a0a0"/><rect x="809" y="606" width="1" height="1" fill="#a0a0a0"/>
<rect x="795" y="618" width="1" height="1" fill="#a0a0a0"/><rect x="809" y="618" width="1" height="1" fill="#a0a0a0"/>
</g>
<!-- mod: hammer -->
<path d="M830 619L839 610" stroke="#000" stroke-width="2.4"/>
<path d="M830 619L839 610" stroke="#c00000" stroke-width="1"/>
<path d="M836 607L839 605L844 609L843 611L841 610L839 612Z" fill="#ffd800" stroke="#000" stroke-width="0.8"/>
<!-- info: yellow question mark -->
<path d="M870.5 609.5Q870.5 606.3 874 606.3Q877.5 606.3 877.5 609.3Q877.5 611.3 875 612.5V614.8" fill="none" stroke="#808000" stroke-width="3.2"/>
<path d="M870.5 609.5Q870.5 606.3 874 606.3Q877.5 606.3 877.5 609.3Q877.5 611.3 875 612.5V614.8" fill="none" stroke="#ffff00" stroke-width="2"/>
<rect x="873.5" y="616.5" width="3" height="3" fill="#ffff00" stroke="#808000" stroke-width="0.8"/>
<!-- xtra newspaper 899..918 x 606..621 -->
<path d="M900.5 607.5H915.5L914.5 619.5H900.5Q899.5 618 900.5 616Z" fill="#fff" stroke="#000"/>
<rect x="901" y="608" width="13" height="3" fill="#0000c0"/>
<rect x="902" y="612" width="5" height="5" fill="#0080c0"/>
<path d="M908 612.5H913M908 614.5H913M908 616.5H913" stroke="#0000a0" stroke-width="1"/>
<rect x="915" y="609" width="3" height="3" fill="#40c0ff"/>
<!-- dropdown -->
<path d="M929 618H934L931.5 621Z" fill="#000"/>
<!-- del X -->
<path d="M953.5 606.5L965.5 618.5M965.5 606.5L953.5 618.5" stroke="#900000" stroke-width="1.7"/>
</svg>

<div class="t" style="left:717.5px;top:620px;width:40px;text-align:center;font-size:10px;letter-spacing:-0.2px">Add</div>
<div class="t" style="left:749.5px;top:620px;width:40px;text-align:center;font-size:10px;letter-spacing:-0.3px">Temp</div>
<div class="t" style="left:783.5px;top:620px;width:40px;text-align:center;font-size:10px;letter-spacing:-0.3px">Make</div>
<div class="t" style="left:815.5px;top:620px;width:40px;text-align:center;font-size:10px;letter-spacing:-0.1px">Mod</div>
<div class="t" style="left:854.5px;top:620px;width:40px;text-align:center;font-size:10px;letter-spacing:-0.3px">Info</div>
<div class="t" style="left:887.5px;top:620px;width:40px;text-align:center;font-size:10px;letter-spacing:-0.4px">Xtra</div>
<div class="t" style="left:939.5px;top:620px;width:40px;text-align:center;font-size:10px;letter-spacing:-0.4px">Del</div>
<div class="vl" style="left:855px;top:603px;height:31px;background:#808080"></div><div class="vl" style="left:856px;top:603px;height:31px;background:#fff"></div>
<div class="vl" style="left:940px;top:603px;height:31px;background:#808080"></div><div class="vl" style="left:941px;top:603px;height:31px;background:#fff"></div>
<div class="hl" style="left:4px;top:653px;width:1020px;background:#808080"></div>
<div class="vl" style="left:4px;top:653px;height:64px;background:#808080"></div>
<div class="hl" style="left:5px;top:654px;width:1018px;background:#404040"></div>
<div class="vl" style="left:5px;top:654px;height:62px;background:#404040"></div>
<div class="hl" style="left:4px;top:716px;width:1020px;background:#fff"></div>
<div class="vl" style="left:1023px;top:653px;height:64px;background:#fff"></div>
<div class="t" style="left:7px;top:656px;letter-spacing:-0.2px">TimeManager::Update: warning, frame 901 was slow (5967 ms)</div>
<div class="t" style="left:7px;top:669px;letter-spacing:-0.2px">TimeManager::Update: warning, frame 943 was slow (12496 ms)</div>
<div class="t" style="left:7px;top:682px;letter-spacing:-0.2px">TimeManager::Update: warning, frame 949 was slow (120110 ms)</div>
<div class="a chk" style="left:1006px;top:671px;width:16px;height:27px"></div>
<div class="sbtn" style="left:1006px;top:655px;width:16px;height:16px"></div>
<div class="sbtn" style="left:1006px;top:690px;width:16px;height:8px"></div>
<div class="sbtn" style="left:1006px;top:698px;width:16px;height:16px"></div>
<svg class="a" style="left:1006px;top:655px" width="16" height="59" shape-rendering="crispEdges"><path d="M7 6H8V7H9V8H10V9H11V10H4V9H5V8H6V7H7Z" fill="#000"/><path d="M4 49H11V50H10V51H9V52H8V53H7V52H6V51H5V50H4Z" fill="#000"/></svg>
<div class="hl" style="left:0px;top:719px;width:1024px;background:#808080"></div>
<div class="hl" style="left:0px;top:720px;width:1024px;background:#fff"></div>
<div class="t" style="left:2px;top:726px;">Ready</div>
<div class="sunk" style="left:555px;top:724px;width:181px;height:15px"></div>
<div class="t" style="left:557px;top:726px;">Camera (-0.12,-86.22,25.70)</div>
<div class="sunk" style="left:738px;top:724px;width:85px;height:15px"></div>
<div class="t" style="left:739px;top:726px;">Frame 1 / 0</div>
<div class="sunk" style="left:825px;top:724px;width:109px;height:15px"></div>
<div class="sunk" style="left:936px;top:724px;width:88px;height:15px"></div>
<div class="t" style="left:937px;top:726px;letter-spacing:-0.2px">Polys 460</div>
<svg class="a" style="left:1008px;top:725px" width="16" height="15" shape-rendering="crispEdges"><path d="M15 3L3 15M15 7L7 15M15 11L11 15" stroke="#808080" stroke-width="1.2"/><path d="M15 4L4 15M15 8L8 15M15 12L12 15" stroke="#fff" stroke-width="1"/></svg>
<div class="hl" style="left:0px;top:740px;width:1024px;background:#D4D0C8"></div>
<div class="hl" style="left:0px;top:741px;width:1024px;background:#fff"></div>
<div class="sbtn" style="left:2px;top:744px;width:52px;height:22px;border-color:#fff #404040 #404040 #fff;box-shadow:inset -1px -1px 0 #808080"></div>
<div class="t" style="left:22px;top:749px;font-weight:bold;font-size:12px;letter-spacing:0.2px">Start</div>
<div class="vl" style="left:61px;top:746px;height:18px;background:#fff"></div>
<div class="vl" style="left:62px;top:746px;height:18px;background:#808080"></div>
<div class="sbtn" style="left:68px;top:744px;width:112px;height:22px;border-color:#fff #404040 #404040 #fff;box-shadow:inset -1px -1px 0 #808080"></div><div class="t" style="left:91px;top:749px;letter-spacing:-0.1px">LevelEdit</div>
<div class="sbtn" style="left:182px;top:744px;width:112px;height:22px;border-color:#fff #404040 #404040 #fff;box-shadow:inset -1px -1px 0 #808080"></div><div class="t" style="left:205px;top:749px;letter-spacing:-0.1px">Command and ...</div>
<div class="a chk" style="left:296px;top:744px;width:112px;height:22px;border:1px solid;border-color:#404040 #fff #fff #404040;box-shadow:inset 1px 1px 0 #808080"></div><div class="t" style="left:320px;top:750px;font-weight:bold;letter-spacing:0.25px">Untitled - Co...</div>
<div class="sbtn" style="left:410px;top:744px;width:112px;height:22px;border-color:#fff #404040 #404040 #fff;box-shadow:inset -1px -1px 0 #808080"></div><div class="t" style="left:433px;top:749px;letter-spacing:-0.1px">My Computer</div>
<div class="sbtn" style="left:524px;top:744px;width:112px;height:22px;border-color:#fff #404040 #404040 #fff;box-shadow:inset -1px -1px 0 #808080"></div><div class="t" style="left:547px;top:749px;letter-spacing:-0.1px">Windows Medi...</div>
<div class="sbtn" style="left:639px;top:744px;width:112px;height:22px;border-color:#fff #404040 #404040 #fff;box-shadow:inset -1px -1px 0 #808080"></div><div class="t" style="left:662px;top:749px;letter-spacing:-0.1px">Level8b_Movie...</div>
<div class="sbtn" style="left:754px;top:744px;width:112px;height:22px;border-color:#fff #404040 #404040 #fff;box-shadow:inset -1px -1px 0 #808080"></div><div class="t" style="left:777px;top:749px;letter-spacing:-0.1px">Untitled - RenX...</div>
<div class="sunk" style="left:873px;top:744px;width:149px;height:22px"></div>
<div class="t" style="left:968px;top:749px;">10:49 AM</div>
<svg class="a" style="left:0;top:740px" width="1024" height="28" viewBox="0 740 1024 28">
<!-- windows logo 4..19 x 747..761 -->
<path d="M6 748Q9 747 12 748L11 754Q8 753 5 754Z" fill="#f06a20"/>
<path d="M13 749Q16 750 19 749L18 755Q15 756 12 755Z" fill="#60c020"/>
<path d="M5 755Q8 754 11 755L10 761Q7 760 4 761Z" fill="#3070f0"/>
<path d="M12 756Q15 757 18 756L17 762Q14 763 11 762Z" fill="#f0c020"/>
<!-- folder LevelEdit 72..87 x 747..761 -->
<path d="M72 749H78L79 751H86V760H72Z" fill="#e8c050" stroke="#a07810"/>
<path d="M72 760L74 753H88L86 760Z" fill="#ffe890" stroke="#a07810"/>
<!-- IE 186..201 -->
<circle cx="193.5" cy="755" r="6" fill="#2a7ae0"/>
<circle cx="193.5" cy="755" r="3" fill="#fff"/>
<rect x="190" y="754" width="8" height="2" fill="#2a7ae0"/>
<path d="M185 761Q192 746 202 748Q195 750 187 762Z" fill="#f0b020"/>
<!-- app icon 300..315 -->
<svg x="301" y="748" width="16" height="16" viewBox="0 0 16 16"><rect width="16" height="16" fill="#44dcb0"/>
<rect x="1" y="1" width="14" height="14" fill="#34b896" opacity="0.6"/>
<g fill="#0e6a58" stroke="#0e6a58" stroke-width="1.6" opacity="0.85">
<path d="M1 5L3 3L6 2.5L9 3L10 4.5L8 5L7 6.5L5 8L3 7.5L1.5 8Z"/>
<path d="M7 7L13.5 13.5" stroke-width="4.4"/>
<path d="M12.5 4.5L5 12" stroke-width="4.2"/>
<circle cx="13.2" cy="4" r="2.5"/>
<circle cx="4.8" cy="12.6" r="2.5"/>
</g><g fill="#fff" stroke="#fff" stroke-width="0">
<path d="M1 5L3 3L6 2.5L9 3L10 4.5L8 5L7 6.5L5 8L3 7.5L1.5 8Z"/>
<path d="M7 7L13.5 13.5" stroke-width="3"/>
<path d="M12.5 4.5L5 12" stroke-width="2.8"/>
<circle cx="13.2" cy="4" r="2.5"/>
<circle cx="4.8" cy="12.6" r="2.5"/>
</g><path d="M14.6 2.2L12.8 4L14 5.2L15.6 3.5Z M3.4 14.4L5.2 12.6L4 11.4L2.4 13Z" fill="#30b090"/></svg>
<!-- my computer 414..429 -->
<path d="M417 749H425L426 760H418Z" fill="#6090e0" stroke="#204080" stroke-width="0.8"/>
<rect x="416" y="760" width="11" height="3" fill="#c0c0d0"/>
<!-- WMP 528..543 -->
<circle cx="535.5" cy="755" r="6.5" fill="#404040"/>
<circle cx="535.5" cy="755" r="5.5" fill="#2050c0"/>
<path d="M533 752L539 755L533 758Z" fill="#fff"/>
<!-- notepad-like 643..658 -->
<path d="M645 748L656 749L655 762L643 761Z" fill="#60a0e0" stroke="#3060a0" stroke-width="0.8"/>
<!-- renx 758..773 -->
<path d="M763 748L766 753L769 748L772 750L768 755V762H764V755L759 750Z" fill="#e00000" stroke="#600000" stroke-width="0.8"/>
<!-- tray icons -->
<text x="878" y="759" font-family="Liberation Sans" font-weight="bold" font-size="11">«</text>
<circle cx="898.5" cy="754.5" r="7" fill="#f0b030"/>
<circle cx="898.5" cy="754.5" r="5" fill="#ffd800" stroke="#000" stroke-width="1"/>
<path d="M893.5 754.5H903.5M898.5 749.5V759.5M895 751.5H902M895 757.5H902" stroke="#000" stroke-width="0.9"/>
<circle cx="916.5" cy="754.5" r="7" fill="#f0b030"/>
<circle cx="916.5" cy="754.5" r="5.5" fill="#ffd000"/>
<path d="M912 755L915 751L917 756L919 752" stroke="#404000" fill="none"/>
<circle cx="920" cy="759" r="4" fill="#e02020"/>
<path d="M918 757L922 761M922 757L918 761" stroke="#fff" stroke-width="1.2"/>
<circle cx="935" cy="755" r="7" fill="#2030c0"/>
<circle cx="935" cy="755" r="5" fill="#fff"/>
<path d="M932.5 751.5H936L938 753.5V758.5H932.5Z" fill="#fff" stroke="#000" stroke-width="0.9"/>
<rect x="945" y="750" width="8" height="7" fill="#406090"/>
<rect x="946" y="751" width="6" height="5" fill="#5080c0"/>
<rect x="946" y="758" width="8" height="3" fill="#8090b0"/>
<path d="M955 750Q957 752 955 754M957 748Q960 752 957 756" stroke="#6080a0" fill="none" stroke-width="0.8"/>
</svg>

</body></html>
